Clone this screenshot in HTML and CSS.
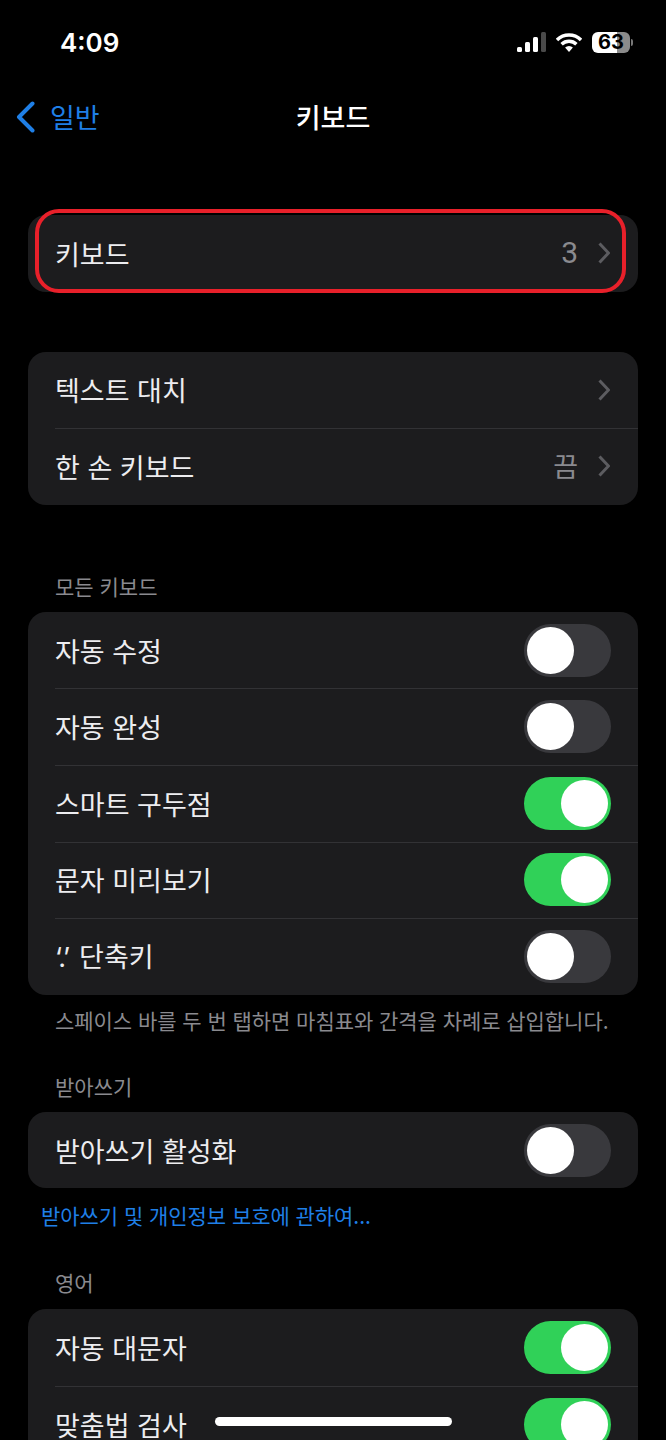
FILE: index.html
```html
<!DOCTYPE html>
<html lang="ko">
<head>
<meta charset="utf-8">
<title>키보드</title>
<link rel="stylesheet" href="styles.css">
</head>
<body>
<div class="screen">
  <header class="status">
    <span class="time">4:09</span>
    <div class="status-icons">
      <svg class="signal" width="29" height="20" viewBox="0 0 29 20">
        <rect x="0" y="15" width="5" height="5" rx="1.5" fill="#fff"/>
        <rect x="8" y="10" width="5" height="10" rx="1.5" fill="#fff"/>
        <rect x="16" y="5" width="5" height="15" rx="1.5" fill="#fff"/>
        <rect x="24" y="0" width="5" height="20" rx="1.5" fill="#4a4a4a"/>
      </svg>
      <svg class="wifi" width="26" height="19" viewBox="0 0 26 19">
        <path d="M13 19l-3.9-4.4a5.6 5.6 0 0 1 7.8 0z" fill="#fff"/>
        <path d="M1 7a17 17 0 0 1 24 0M5.6 11.2a10.6 10.6 0 0 1 14.8 0" fill="none" stroke="#fff" stroke-width="3.4" stroke-linecap="butt"/>
      </svg>
      <div class="battery"><span class="battery-num">63</span></div>
      <span class="battery-cap"></span>
    </div>
  </header>
  <nav class="nav">
    <a class="back">
      <svg width="19" height="32" viewBox="0 0 19 32"><path d="M16.5 2.5L3 16l13.5 13.5" fill="none" stroke="#1f7fe6" stroke-width="4" stroke-linecap="round" stroke-linejoin="round"/></svg>
      <span class="back-label">일반</span>
    </a>
    <h1 class="title">키보드</h1>
  </nav>

  <section class="group group-first">
    <div class="row"><span class="label">키보드</span><span class="value value-num">3</span><svg class="chev" width="12" height="22" viewBox="0 0 12 22"><path d="M1.5 1.5L10.5 11l-9 9.5" fill="none" stroke="#5c5c60" stroke-width="3"/></svg></div>
    <div class="highlight"></div>
  </section>

  <section class="group group-second">
    <div class="row"><span class="label">텍스트 대치</span><svg class="chev" width="12" height="22" viewBox="0 0 12 22"><path d="M1.5 1.5L10.5 11l-9 9.5" fill="none" stroke="#5c5c60" stroke-width="3"/></svg></div>
    <div class="row"><span class="label">한 손 키보드</span><span class="value">끔</span><svg class="chev" width="12" height="22" viewBox="0 0 12 22"><path d="M1.5 1.5L10.5 11l-9 9.5" fill="none" stroke="#5c5c60" stroke-width="3"/></svg></div>
  </section>

  <p class="section-head head-all">모든 키보드</p>
  <section class="group">
    <div class="row"><span class="label">자동 수정</span><span class="toggle"></span></div>
    <div class="row"><span class="label">자동 완성</span><span class="toggle"></span></div>
    <div class="row"><span class="label">스마트 구두점</span><span class="toggle on"></span></div>
    <div class="row"><span class="label">문자 미리보기</span><span class="toggle on"></span></div>
    <div class="row"><span class="label"><span class="tight">‘.’</span> 단축키</span><span class="toggle"></span></div>
  </section>
  <p class="foot">스페이스 바를 두 번 탭하면 마침표와 간격을 차례로 삽입합니다.</p>

  <p class="section-head head-dict">받아쓰기</p>
  <section class="group">
    <div class="row"><span class="label">받아쓰기 활성화</span><span class="toggle"></span></div>
  </section>
  <p class="link">받아쓰기 및 개인정보 보호에 관하여...</p>

  <p class="section-head head-en">영어</p>
  <section class="group group-last">
    <div class="row"><span class="label">자동 대문자</span><span class="toggle on"></span></div>
    <div class="row"><span class="label">맞춤법 검사</span><span class="toggle on"></span></div>
  </section>
  <div class="home-indicator"></div>
</div>
</body>
</html>
```
FILE: styles.css
```css
* { box-sizing: border-box; }
html, body { margin: 0; padding: 0; background: #000; }
.screen {
  position: relative;
  width: 666px;
  height: 1440px;
  overflow: hidden;
  background: #000;
  color: #f2f2f4;
  font-family: "Noto Sans CJK KR", "Noto Sans", sans-serif;
}
.status {
  display: flex;
  justify-content: space-between;
  align-items: center;
  height: 84px;
  padding: 0 33px 0 60px;
}
.time {
  font-family: Inter, sans-serif;
  font-size: 26px;
  font-weight: 600;
  line-height: 30px;
  padding-top: 2px;
  color: #fff;
}
.status-icons { display: flex; align-items: center; }
.signal { margin-right: 10px; }
.wifi { margin-right: 10px; }
.battery {
  width: 38px;
  height: 21px;
  border-radius: 6px;
  background: linear-gradient(90deg, #fff 0 67%, #8b8b8b 67% 100%);
  display: flex;
  align-items: center;
  justify-content: center;
}
.battery-num {
  font-family: Inter, sans-serif;
  font-size: 20px;
  font-weight: 700;
  line-height: 21px;
  color: #000;
}
.battery-cap {
  width: 2px;
  height: 7px;
  margin-left: 1px;
  border-radius: 0 2px 2px 0;
  background: #777;
}
.nav {
  position: relative;
  display: flex;
  align-items: center;
  justify-content: center;
  height: 66px;
}
.back {
  position: absolute;
  left: 16px;
  top: 17px;
  display: flex;
  align-items: center;
  gap: 15px;
}
.back-label { font-size: 27px; line-height: 32px; color: #1f7fe6; }
.title { margin: 0; font-size: 27px; font-weight: 500; line-height: 66px; color: #fff; }
.group {
  position: relative;
  margin: 0 28px;
  border-radius: 18px;
  background: #1c1c1e;
}
.group-first { margin-top: 65px; }
.group-second { margin-top: 60px; }
.row {
  position: relative;
  display: flex;
  align-items: center;
  height: 76.6px;
  padding: 0 27px;
}
.row + .row::before {
  content: "";
  position: absolute;
  left: 27px;
  right: 0;
  top: 0;
  height: 1px;
  background: #323235;
}
.label { flex: 1; padding-top: 1px; font-size: 27px; line-height: 30px; color: #ededf0; }
.tight { font-family: Inter, sans-serif; letter-spacing: -1.5px; margin-right: 3px; }
.value { font-size: 27px; line-height: 30px; color: #8a8a8f; margin-right: 20px; }
.value-num { font-family: Roboto, sans-serif; font-size: 30px; }
.chev { margin-right: 1px; }
.highlight {
  position: absolute;
  left: 7px;
  right: 12px;
  top: -6px;
  bottom: -1px;
  border: 4px solid #e8202a;
  border-radius: 24px;
}
.toggle {
  position: relative;
  width: 87px;
  height: 53px;
  border-radius: 27px;
  background: #39393d;
}
.toggle::after {
  content: "";
  position: absolute;
  left: 3px;
  top: 3px;
  width: 47px;
  height: 47px;
  border-radius: 50%;
  background: #fff;
}
.toggle.on { background: #30d158; }
.toggle.on::after { left: 37px; }
.section-head {
  margin: 0 0 0 55px;
  font-size: 21px;
  line-height: 28px;
  color: #8a8a8f;
}
.head-all { margin-top: 67px; margin-bottom: 12px; }
.head-dict { margin-top: 38px; margin-bottom: 12px; }
.head-en { margin-top: 39px; margin-bottom: 13px; }
.foot {
  margin: 11px 0 0 55px;
  font-size: 21px;
  letter-spacing: -0.05px;
  line-height: 28px;
  color: #8a8a8f;
  white-space: nowrap;
}
.link {
  margin: 13px 0 0 41px;
  font-size: 21px;
  letter-spacing: -0.05px;
  line-height: 28px;
  color: #1f7fe6;
}
.home-indicator {
  position: absolute;
  left: 215px;
  top: 1417px;
  width: 237px;
  height: 9px;
  border-radius: 5px;
  background: #fff;
}
```
